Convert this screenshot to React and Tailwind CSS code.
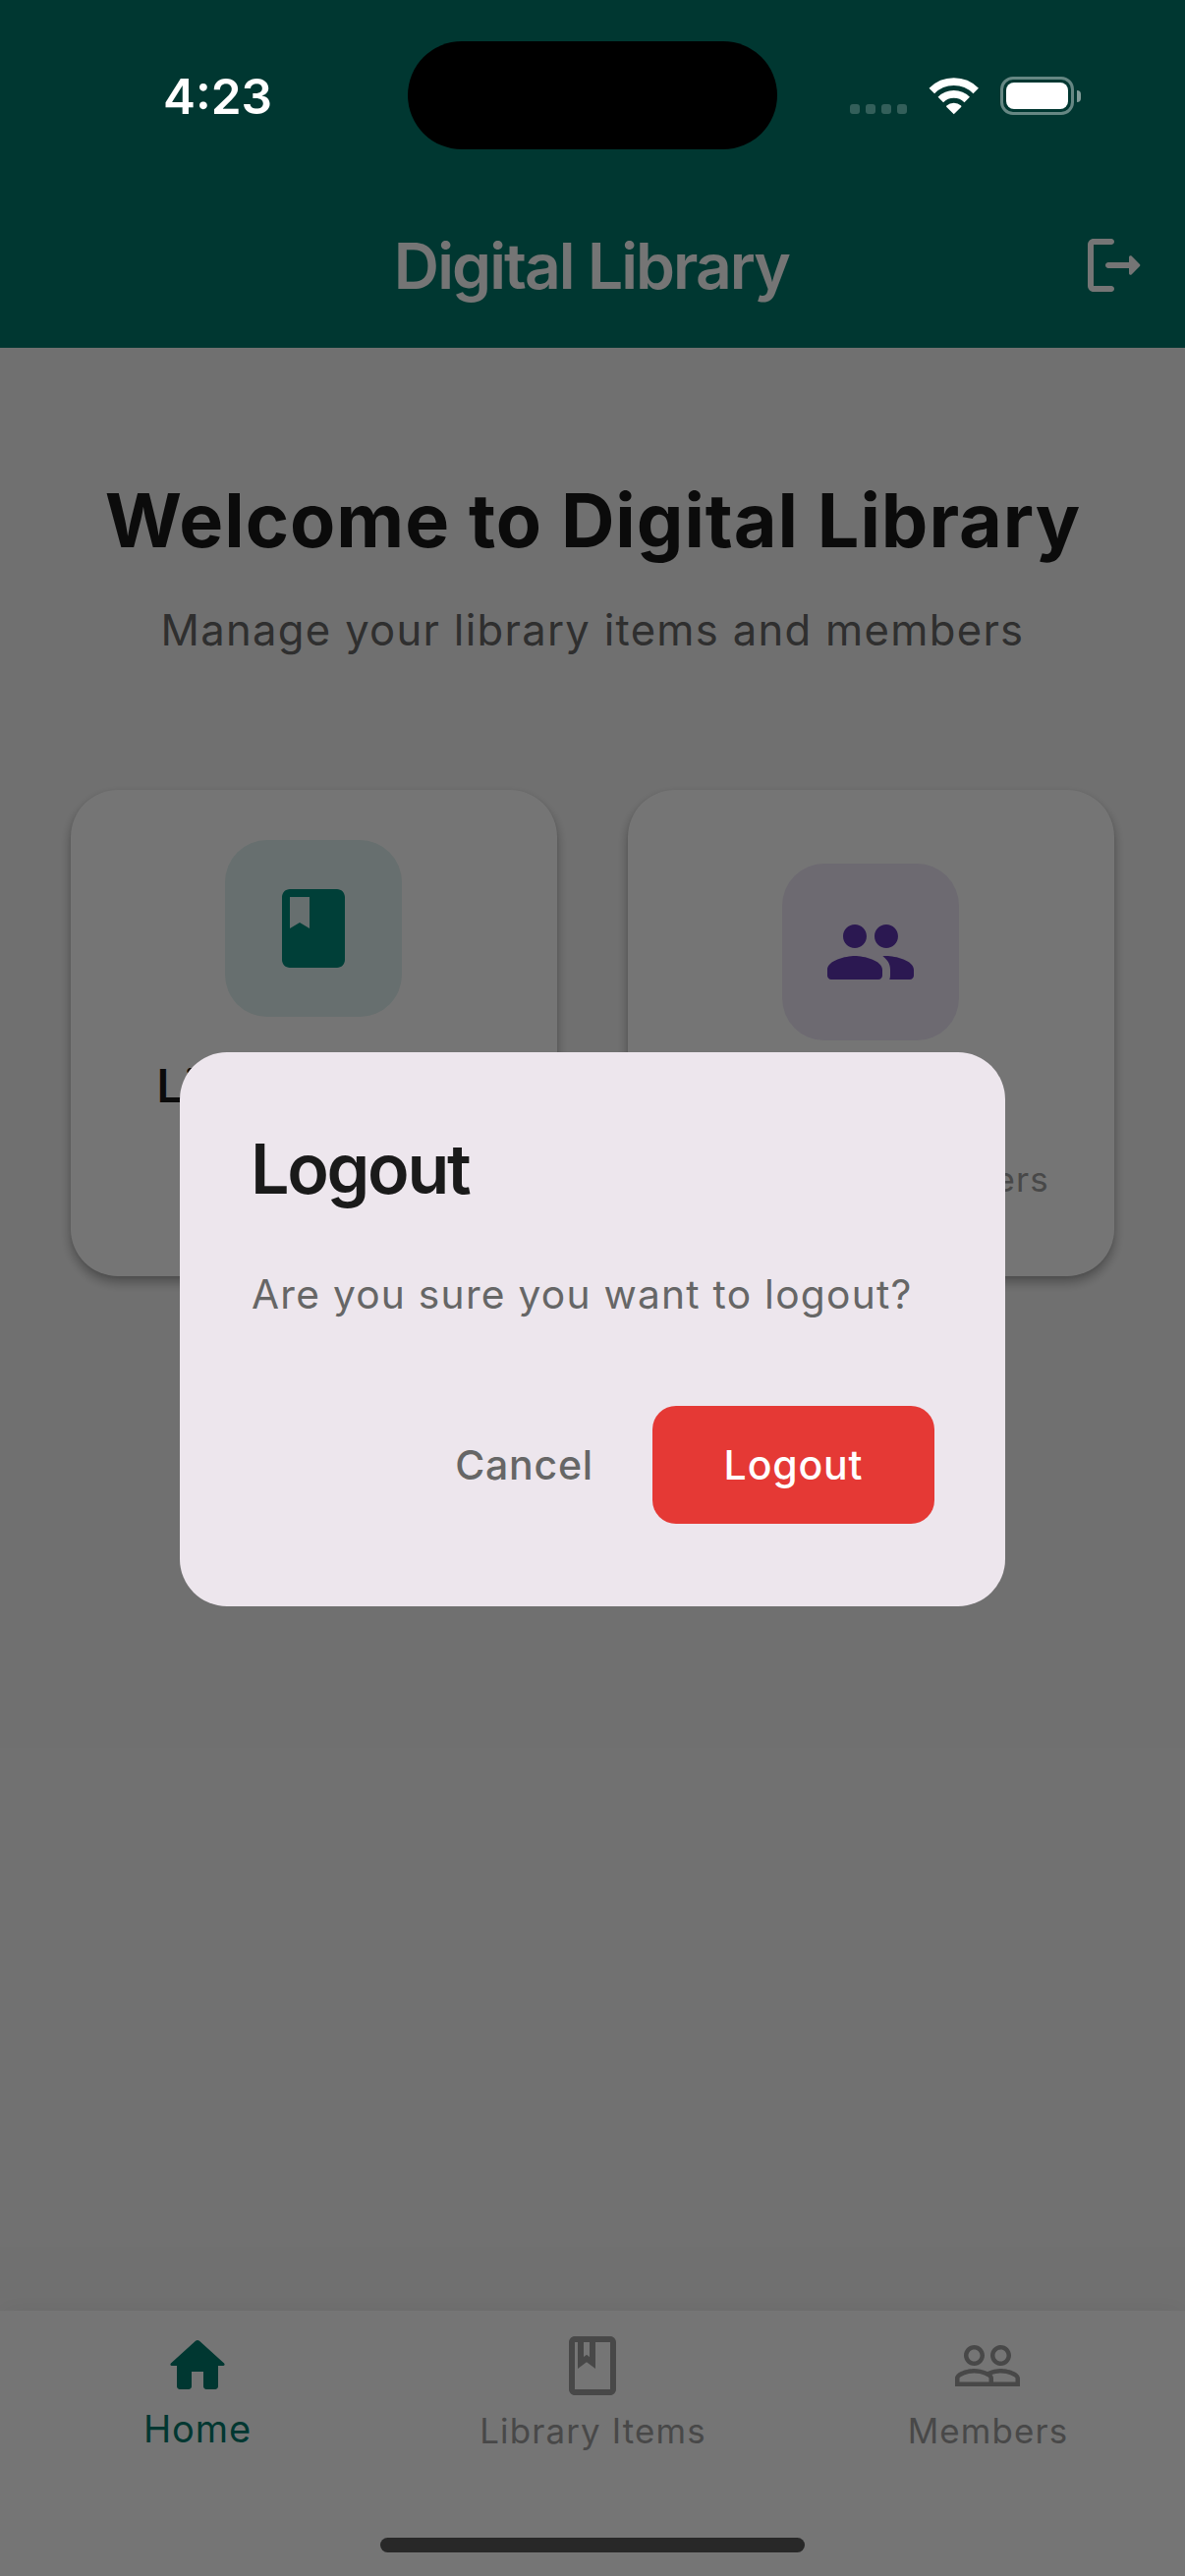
import React from "react";

const ICONS = {
  logout:
    "M5 5h6c.55 0 1-.45 1-1s-.45-1-1-1H5c-1.1 0-2 .9-2 2v14c0 1.1.9 2 2 2h6c.55 0 1-.45 1-1s-.45-1-1-1H5V5zm15.65 6.65-2.79-2.79c-.32-.32-.86-.1-.86.35V11h-7c-.55 0-1 .45-1 1s.45 1 1 1h7v1.79c0 .45.54.67.85.35l2.79-2.79c.2-.19.2-.51.01-.7z",
  book: "M18 2H6c-1.1 0-2 .9-2 2v16c0 1.1.9 2 2 2h12c1.1 0 2-.9 2-2V4c0-1.1-.9-2-2-2zM6 4h5v8l-2.5-1.5L6 12V4z",
  people:
    "M16 11c1.66 0 2.99-1.34 2.99-3S17.66 5 16 5s-3 1.34-3 3 1.34 3 3 3zm-8 0c1.66 0 2.99-1.34 2.99-3S9.66 5 8 5 5 6.34 5 8s1.34 3 3 3zm0 2c-2.33 0-7 1.17-7 3.5V18c0 .55.45 1 1 1h12c.55 0 1-.45 1-1v-1.5c0-2.33-4.67-3.5-7-3.5zm8 0c-.29 0-.62.02-.97.05.02.01.03.03.04.04 1.14.83 1.93 1.94 1.93 3.41V18c0 .35-.07.69-.18 1H22c.55 0 1-.45 1-1v-1.5c0-2.33-4.67-3.5-7-3.5z",
  home: "M10 19v-5h4v5c0 .55.45 1 1 1h3c.55 0 1-.45 1-1v-7h1.7c.46 0 .68-.57.33-.87L12.67 3.6c-.38-.34-.96-.34-1.34 0l-8.36 7.53c-.34.3-.13.87.33.87H5v7c0 .55.45 1 1 1h3c.55 0 1-.45 1-1z",
  bookOutline:
    "M18 2H6c-1.1 0-2 .9-2 2v16c0 1.1.9 2 2 2h12c1.1 0 2-.9 2-2V4c0-1.1-.9-2-2-2zM9 4h2v5l-1-.75L9 9V4zm9 16H6V4h1v9l3-2.25L13 13V4h5v16z",
  peopleOutline:
    "M16.5 13c-1.2 0-3.07.34-4.5 1-1.43-.67-3.3-1-4.5-1C5.33 13 1 14.08 1 16.25V19h22v-2.75c0-2.17-4.33-3.25-6.5-3.25zm-4 4.5h-10v-1.25c0-.54 2.56-1.75 5-1.75s5 1.21 5 1.75v1.25zm9 0H14v-1.25c0-.46-.2-.86-.52-1.22.88-.3 1.96-.53 3.02-.53 2.44 0 5 1.21 5 1.75v1.25zM7.5 12c1.93 0 3.5-1.57 3.5-3.5S9.43 5 7.5 5 4 6.57 4 8.5 5.57 12 7.5 12zm0-5.5c1.1 0 2 .9 2 2s-.9 2-2 2-2-.9-2-2 .9-2 2-2zm9 5.5c1.93 0 3.5-1.57 3.5-3.5S18.43 5 16.5 5 13 6.57 13 8.5s1.57 3.5 3.5 3.5zm0-5.5c1.1 0 2 .9 2 2s-.9 2-2 2-2-.9-2-2 .9-2 2-2z",
};

function Icon({ name, className }) {
  return (
    <svg viewBox="0 0 24 24" fill="currentColor" className={className} aria-hidden="true">
      <path fillRule={name === "bookOutline" ? "evenodd" : undefined} d={ICONS[name]} />
    </svg>
  );
}

function StatusBar() {
  return (
    <div className="absolute inset-x-0 top-0 flex h-[186px] items-start text-white">
      <div className="ml-[166px] mt-[68px] w-[249px] text-[49.5px] font-semibold leading-[60px]">4:23</div>
      <div className="mt-[42px] h-[110px] w-[376px] rounded-[55px] bg-black" />
      <div className="ml-[74px] mt-[106px] flex gap-[6px]">
        {[0, 1, 2, 3].map((i) => (
          <span key={i} className="h-[10px] w-[10px] rounded-[3px] bg-white/20" />
        ))}
      </div>
      <svg viewBox="0 0 52 38" className="ml-[22px] mt-[79px] h-[38px] w-[52px]" fill="none" stroke="#fff">
        <path strokeWidth="7.8" d="M3.3 13.4a31.8 31.8 0 0 1 44.9 0" />
        <path strokeWidth="7.8" d="M12.3 22.4a19.1 19.1 0 0 1 26.9 0" />
        <path
          fill="#fff"
          stroke="none"
          d="M25.75 37.2 18.4 29.9c-.5-.5-.5-1 0-1.4a10.9 10.9 0 0 1 14.7 0c.5.4.5.9 0 1.4z"
        />
      </svg>
      <div className="ml-[21px] mt-[78px] flex items-center gap-[3px]">
        <div className="h-[39px] w-[75px] rounded-[13px] border-[3px] border-white/40 p-[3px]">
          <div className="h-[27px] w-[63px] rounded-[8px] bg-white" />
        </div>
        <div className="h-[12px] w-[4px] rounded-r-[6px] bg-white/50" />
      </div>
    </div>
  );
}

function AppBar() {
  return (
    <header className="bg-[#00796b] pt-[186px] text-white">
      <div className="grid h-[168px] grid-cols-[108px_1fr_108px] items-center">
        <span />
        <h1 className="mt-[2px] pr-[2px] text-center text-[64px] font-semibold leading-[80px] tracking-[-1.9px]">
          Digital Library
        </h1>
        <Icon name="logout" className="h-[72px] w-[72px]" />
      </div>
    </header>
  );
}

function LibraryCard({ icon, title, tile, children }) {
  return (
    <div className="flex h-[495px] w-[495px] flex-col items-center justify-center rounded-[48px] bg-white pr-px text-center shadow-[0_6px_12px_rgba(0,0,0,0.32),0_1px_3px_rgba(0,0,0,0.06)]">
      <div className={`flex h-[180px] w-[180px] items-center justify-center rounded-[43px] ${tile}`}>
        <Icon name={icon} className="h-24 w-24" />
      </div>
      <h3 className="mt-[36px] text-[46.5px] font-semibold leading-[69px] tracking-[1.84px] text-[#1a1a1a]">
        {title}
      </h3>
      <p className="mt-3 text-[34.9px] leading-[48px] tracking-[1.08px] text-[#9e9e9e]">{children}</p>
    </div>
  );
}

function NavItem({ icon, label, active }) {
  return (
    <div className={`flex flex-1 flex-col items-center ${active ? "text-[#00796b]" : "text-[#9e9e9e]"}`}>
      <Icon name={icon} className="h-[72px] w-[72px]" />
      <span
        className={
          active
            ? "mt-[4px] text-[38px] leading-[49px] tracking-[0.9px]"
            : "mt-[6px] pl-px text-[34.9px] leading-[49px] tracking-[1.15px]"
        }
      >
        {label}
      </span>
    </div>
  );
}

function LogoutDialog() {
  return (
    <div
      role="dialog"
      className="absolute left-[183px] top-[1071px] flex h-[564px] w-[840px] flex-col rounded-[48px] bg-[#ede6ed] px-[72px] pt-[72px]"
    >
      <h2 className="text-[70px] font-semibold leading-[93px] tracking-[-2.3px] text-[#1a1a1a]">Logout</h2>
      <p className="mt-[52px] whitespace-nowrap pl-px text-[40.7px] leading-[60px] tracking-[1.25px] text-[#666]">
        Are you sure you want to logout?
      </p>
      <div className="mt-[83px] flex items-center justify-end gap-[60px] font-medium">
        <button className="text-[41px] leading-[60px] tracking-[0.79px] text-[#666]">Cancel</button>
        <button className="h-[120px] w-[287px] rounded-[24px] bg-[#e53935] text-[41px] leading-[60px] tracking-[0.84px] text-white">
          Logout
        </button>
      </div>
    </div>
  );
}

export default function App() {
  return (
    <div className="relative flex h-[2622px] w-[1206px] flex-col overflow-hidden bg-[#f5f5f5] font-['Inter',sans-serif]">
      <AppBar />

      <main className="flex flex-1 flex-col px-[72px] pt-[127px] text-center">
        <h2 className="whitespace-nowrap pl-px text-[75.5px] font-bold leading-[97px] tracking-[0.95px] text-[#1a1a1a]">
          Welcome to Digital Library
        </h2>
        <p className="mt-[32px] text-[43.6px] leading-[64px] tracking-[1.29px] text-[#666]">
          Manage your library items and members
        </p>
        <div className="mt-[130px] flex justify-between">
          <LibraryCard icon="book" title="Library Items" tile="bg-[#e0f2f1] text-[#00897b]">
            Manage books
            <br />
            and media
          </LibraryCard>
          <LibraryCard icon="people" title="Members" tile="bg-[#ede7f6] text-[#5e35b1]">
            Manage all members
          </LibraryCard>
        </div>
      </main>

      <nav className="flex h-[270px] bg-white pt-[20px] shadow-[0_-4px_24px_rgba(0,0,0,0.05)]">
        <NavItem icon="home" label="Home" active />
        <NavItem icon="bookOutline" label="Library Items" />
        <NavItem icon="peopleOutline" label="Members" />
      </nav>

      <div className="absolute inset-0 bg-black/54" />
      <StatusBar />
      <LogoutDialog />
      <div className="absolute bottom-[24px] left-[387px] h-[15px] w-[432px] rounded-full bg-[#282828]" />
    </div>
  );
}
